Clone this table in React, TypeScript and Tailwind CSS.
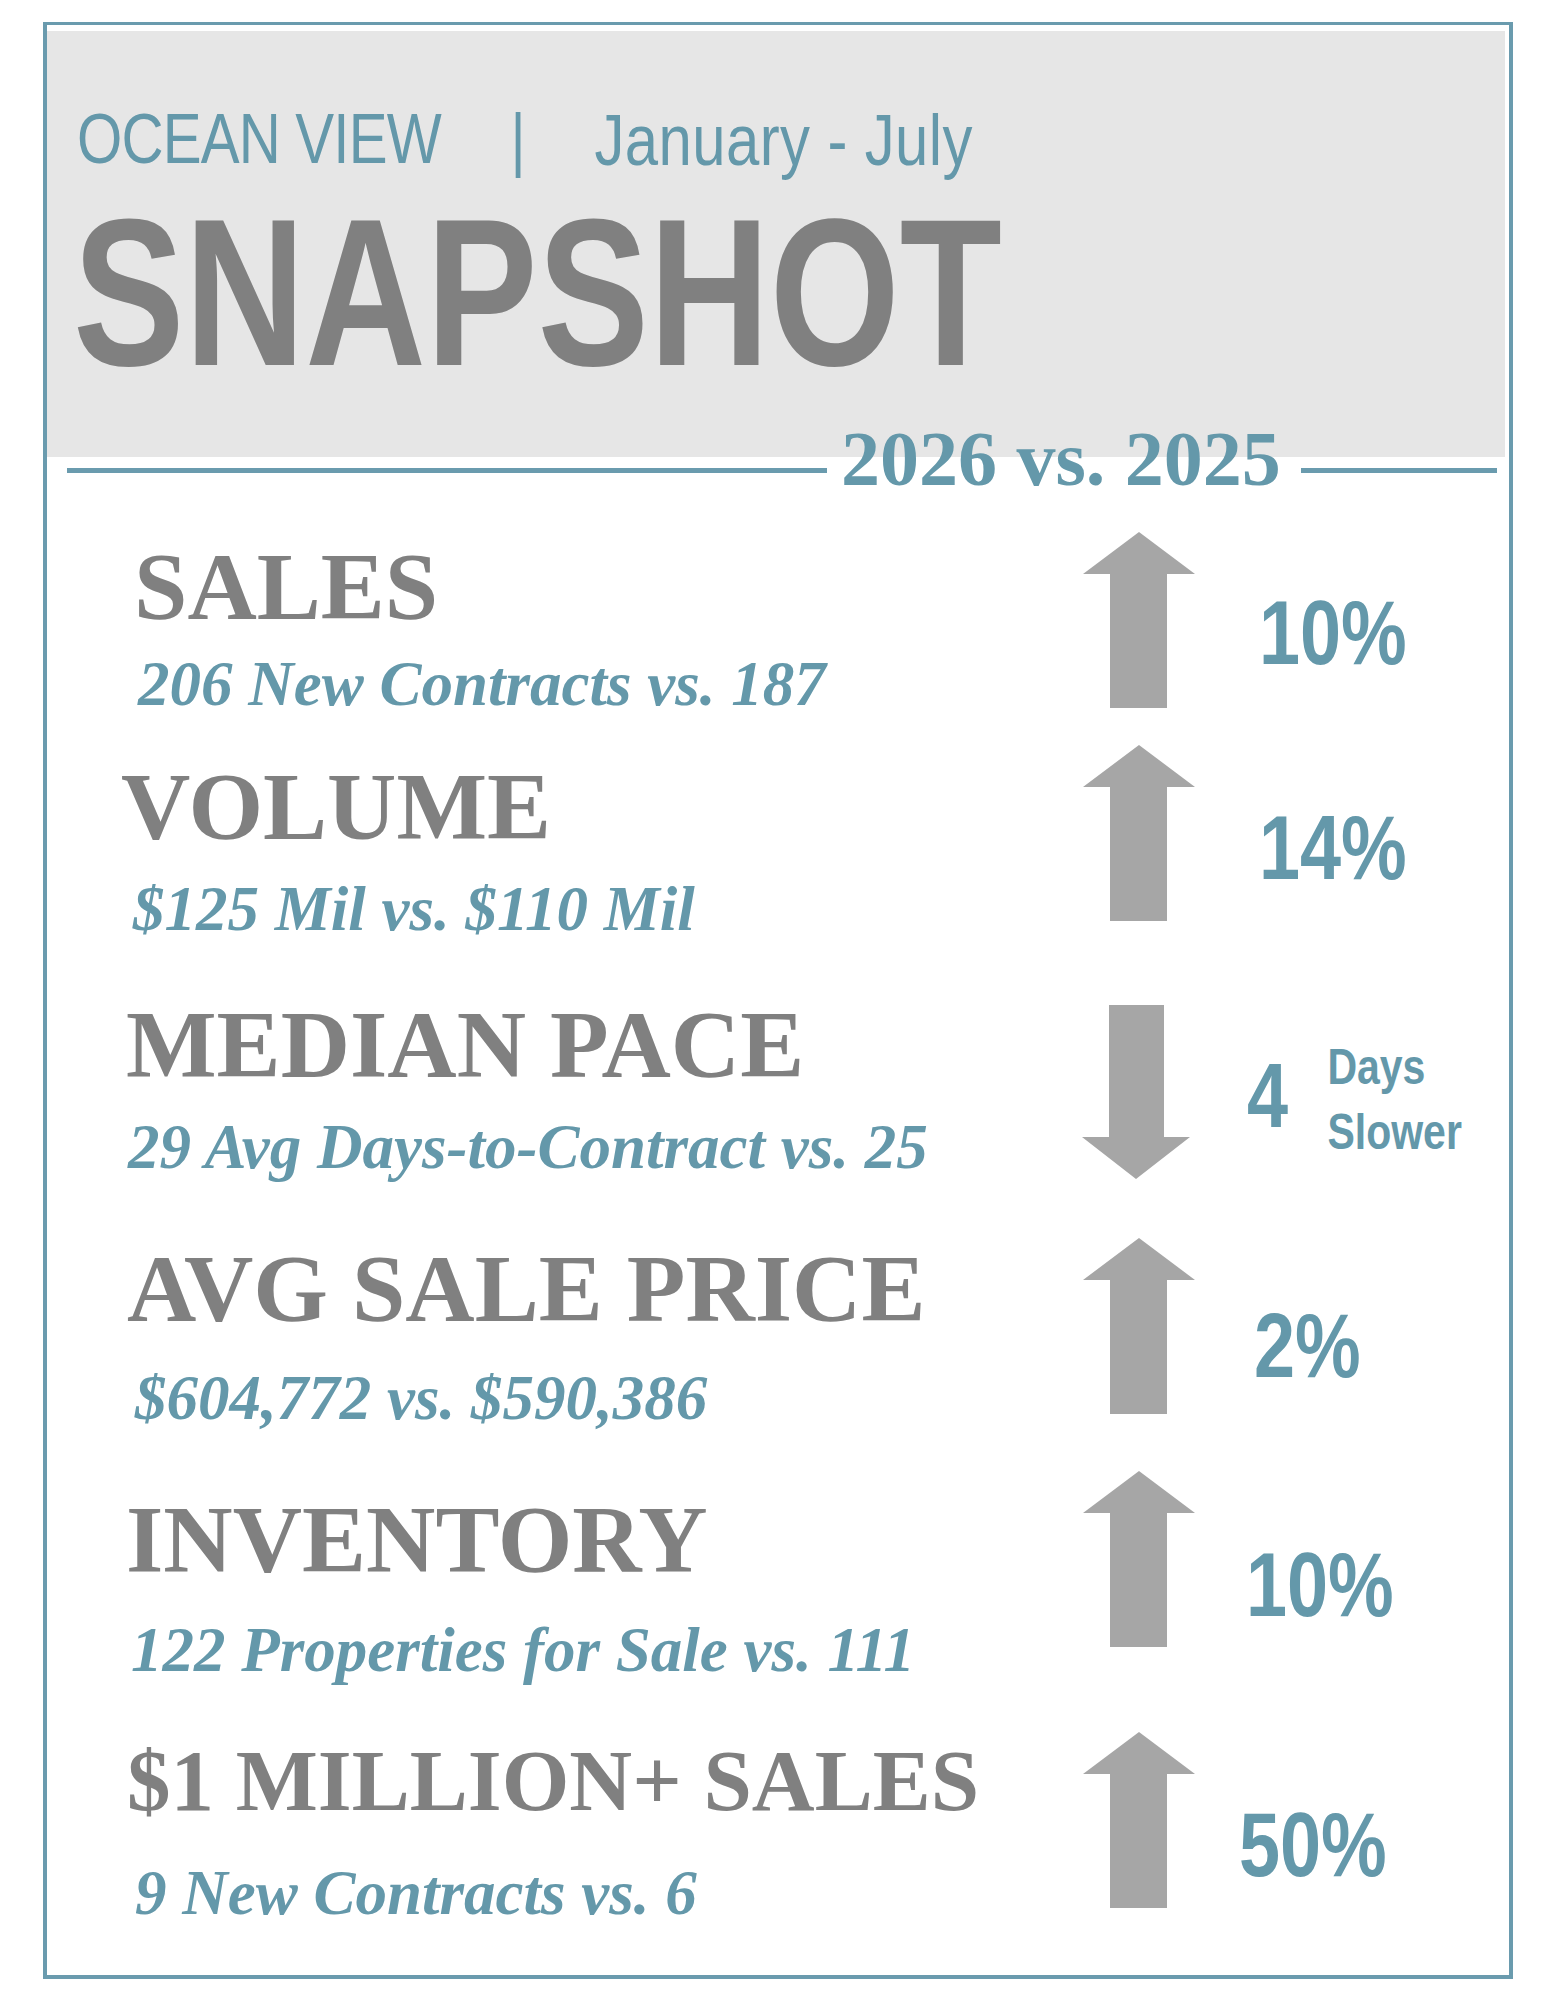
const sans = "font-['Liberation_Sans','Arial',sans-serif]";
const serif = "font-['Liberation_Serif','Times_New_Roman',serif]";

type Row = {
  label: string;
  sub: string;
  value: string;
  dir: 'up' | 'down';
  rowCls: string;
  labelCls: string;
  subCls: string;
  arrowCls: string;
  valueCls: string;
};

const rows: Row[] = [
  {
    label: 'SALES',
    sub: '206 New Contracts vs. 187',
    value: '10%',
    dir: 'up',
    rowCls: 'h-[220px]',
    labelCls: 'mt-[19px] ml-[7px] text-[96px]',
    subCls: 'mt-[18px] ml-[11px]',
    arrowCls: 'mt-[12px]',
    valueCls: 'mt-[68px] ml-[64px]',
  },
  {
    label: 'VOLUME',
    sub: '$125 Mil vs. $110 Mil',
    value: '14%',
    dir: 'up',
    rowCls: 'h-[245px]',
    labelCls: 'mt-[19px] -ml-[6px] text-[96px]',
    subCls: 'mt-[23px] ml-[6px]',
    arrowCls: 'mt-[5px]',
    valueCls: 'mt-[63px] ml-[64px]',
  },
  {
    label: 'MEDIAN PACE',
    sub: '29 Avg Days-to-Contract vs. 25',
    value: '4',
    dir: 'down',
    rowCls: 'h-[245px]',
    labelCls: 'mt-[12px] -ml-[1px] text-[96px]',
    subCls: 'mt-[23px] ml-[1px]',
    arrowCls: 'mt-[20px]',
    valueCls: 'mt-[66px] ml-[53px]',
  },
  {
    label: 'AVG SALE PRICE',
    sub: '$604,772 vs. $590,386',
    value: '2%',
    dir: 'up',
    rowCls: 'h-[235px]',
    labelCls: 'mt-[11px] ml-0 text-[96px]',
    subCls: 'mt-[30px] ml-[8px]',
    arrowCls: 'mt-[8px]',
    valueCls: 'mt-[71px] ml-[59px]',
  },
  {
    label: 'INVENTORY',
    sub: '122 Properties for Sale vs. 111',
    value: '10%',
    dir: 'up',
    rowCls: 'h-[255px]',
    labelCls: 'mt-[27px] -ml-[1px] text-[96px]',
    subCls: 'mt-[31px] ml-[4px]',
    arrowCls: 'mt-[6px]',
    valueCls: 'mt-[75px] ml-[51px]',
  },
  {
    label: '$1 MILLION+ SALES',
    sub: '9 New Contracts vs. 6',
    value: '50%',
    dir: 'up',
    rowCls: 'h-[250px]',
    labelCls: 'mt-[17px] ml-0 text-[87px]',
    subCls: 'mt-[38px] ml-[8px]',
    arrowCls: 'mt-[12px]',
    valueCls: 'mt-[80px] ml-[44px]',
  },
];

function Arrow({ dir }: { dir: 'up' | 'down' }) {
  return (
    <svg width="112" height="176" viewBox="0 0 112 176" className="block">
      {dir === 'up' ? (
        <polygon points="56,0 112,42 84,42 84,176 27,176 27,42 0,42" fill="#a6a6a6" />
      ) : (
        <polygon points="27,0 82,0 82,132 108,132 54,174 0,132 27,132" fill="#a6a6a6" />
      )}
    </svg>
  );
}

export default function App() {
  return (
    <div className="w-[1545px] min-h-[2000px] bg-white pt-[22px]">
      <div className="ml-[43px] w-[1470px] h-[1957px] border-x-[4px] border-t-[3px] border-b-[4px] border-[#6a9bae] flex flex-col">
        {/* header block */}
        <div className="mt-[6px] mr-[4px] h-[426px] bg-[#e6e6e6] pt-[72px] pl-[30px]">
          <div className={`${sans} text-[71px] leading-none text-[#6498aa] whitespace-nowrap flex items-start w-max scale-x-[0.82] origin-left`}>
            <span className="tracking-[-1px]">OCEAN VIEW</span>
            <span className="ml-[85px]">|</span>
            <span className="ml-[84px] text-[73px] tracking-[0.5px]">January - July</span>
          </div>
          <div className={`${sans} mt-[12px] -ml-[4px] w-max text-[209px] leading-none font-bold text-[#808080] scale-x-[0.8] origin-left`}>
            SNAPSHOT
          </div>
        </div>

        {/* comparison divider */}
        <div className="-mt-[37px] flex items-start pl-[20px] pr-[12px]">
          <div className="mt-[48px] h-[5px] w-[760px] bg-[#6a9bae]" />
          <span className={`${serif} ml-[14px] text-[78px] leading-none font-bold text-[#6498aa] whitespace-nowrap`}>
            2026 vs. 2025
          </span>
          <div className="mt-[48px] ml-[20px] h-[5px] flex-1 bg-[#6a9bae]" />
        </div>

        <div className="mt-[22px] pl-[80px]">
          {rows.map((r) => (
            <div key={r.label} className={`flex ${r.rowCls}`}>
              <div className="w-[956px] flex flex-col items-start">
                <div className={`${serif} ${r.labelCls} leading-none font-bold text-[#808080] whitespace-nowrap`}>
                  {r.label}
                </div>
                <div className={`${serif} ${r.subCls} text-[63px] leading-none font-bold italic text-[#6498aa] whitespace-nowrap`}>
                  {r.sub}
                </div>
              </div>
              <div className={r.arrowCls}>
                <Arrow dir={r.dir} />
              </div>
              <div className={`${sans} ${r.valueCls} flex items-start h-max font-bold text-[#6498aa] whitespace-nowrap scale-x-[0.82] origin-left`}>
                <span className="text-[90px] leading-none">{r.value}</span>
                {r.dir === 'down' && (
                  <div className="ml-[48px] -mt-[9px] flex flex-col gap-[15px] text-[50px] leading-none">
                    <span>Days</span>
                    <span>Slower</span>
                  </div>
                )}
              </div>
            </div>
          ))}
        </div>
      </div>
    </div>
  );
}
